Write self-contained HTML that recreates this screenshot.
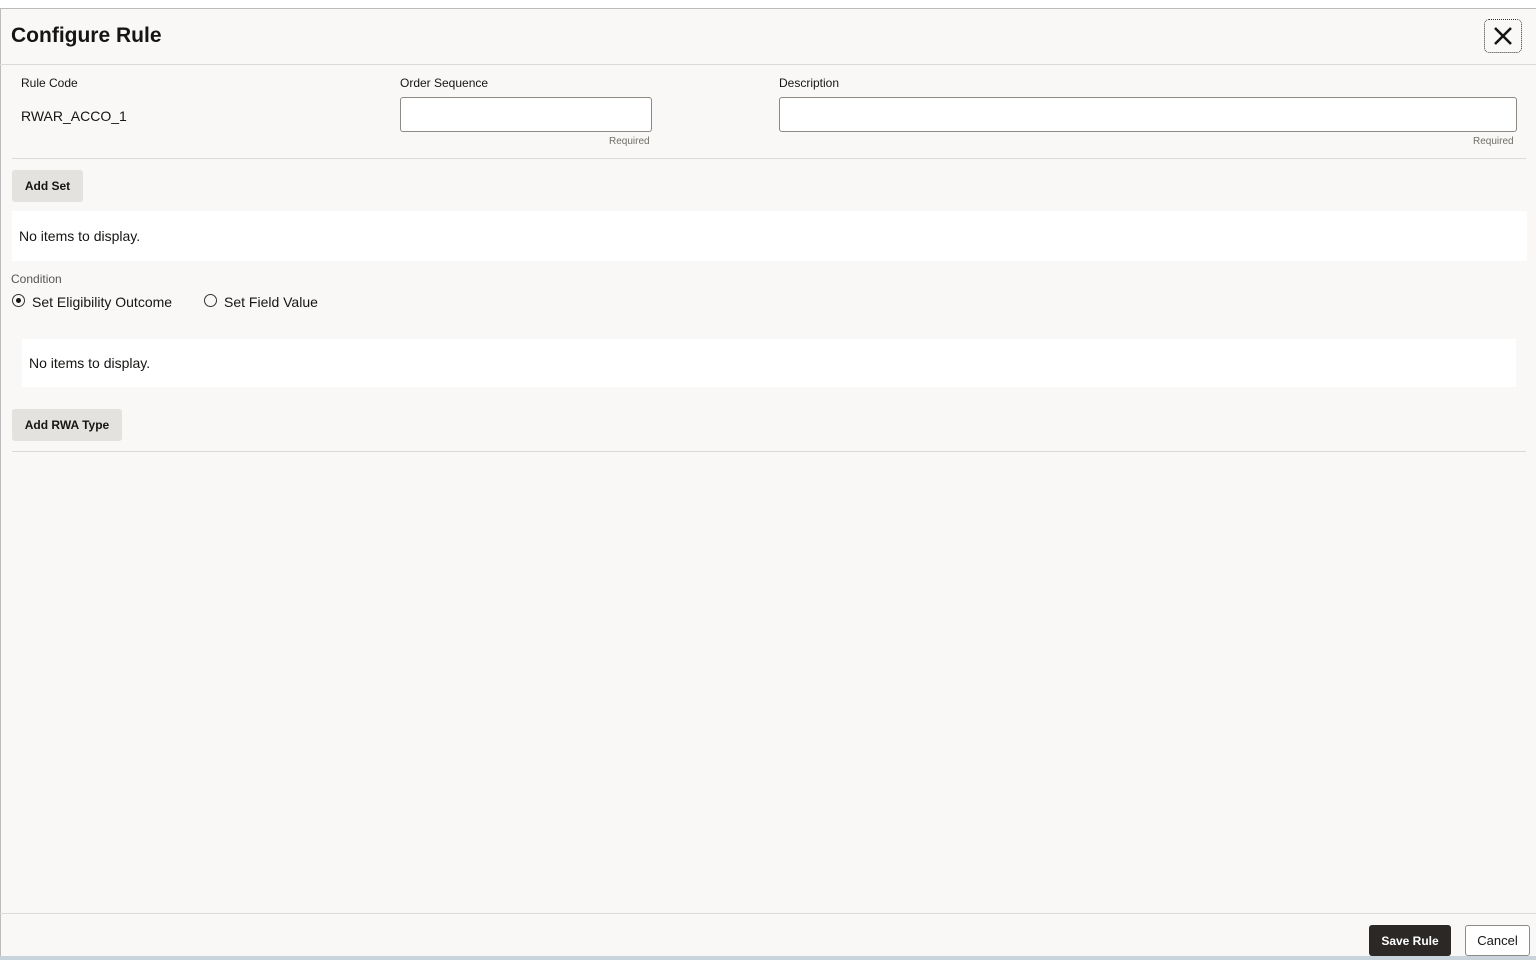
<!DOCTYPE html>
<html><head><style>
*{box-sizing:border-box;margin:0;padding:0}
body{width:1536px;height:960px;background:#fff;font-family:"Liberation Sans",sans-serif;color:#161513;position:relative;overflow:hidden}
.dlg{position:absolute;left:0;top:8px;width:1536px;height:948px;background:#f9f8f6;box-shadow:inset 1px 1px 0 #bbb}
.a{position:absolute}
.lbl{font-size:12px;color:#161513}
.inp{position:absolute;height:35px;border:1px solid #8d8a86;border-radius:3px;background:#fff}
.req{font-size:10px;color:#6f6c68;position:absolute}
.btn{position:absolute;background:#e4e2df;border-radius:3px;font-size:12px;font-weight:bold;display:flex;align-items:center;justify-content:center;color:#161513}
.hr{position:absolute;height:1px;background:#dcdad6}
.empty{position:absolute;background:#fff;font-size:14px;padding-left:7px;display:flex;align-items:center}
.radio{position:absolute;width:13px;height:13px;border:1.5px solid #333;border-radius:50%}
</style></head><body>
<div class="dlg">
<div class="a" style="left:11px;top:16px;font-size:21px;font-weight:bold">Configure Rule</div>
<div class="a" style="left:1484px;top:11px;width:38px;height:34px;border:1px dotted #333;border-radius:5px">
<svg width="36" height="32" viewBox="0 0 36 32"><path d="M10 8L26 24M26 8L10 24" stroke="#161513" stroke-width="2.6"/></svg></div>
<div class="hr" style="left:0;top:56px;width:1536px"></div>
<div class="a lbl" style="left:21px;top:68px">Rule Code</div>
<div class="a" style="left:21px;top:100px;font-size:14px">RWAR_ACCO_1</div>
<div class="a lbl" style="left:400px;top:68px">Order Sequence</div>
<div class="inp" style="left:400px;top:89px;width:252px"></div>
<div class="req" style="left:609px;top:128px">Required</div>
<div class="a lbl" style="left:779px;top:68px">Description</div>
<div class="inp" style="left:779px;top:89px;width:738px"></div>
<div class="req" style="left:1473px;top:128px">Required</div>
<div class="hr" style="left:12px;top:150px;width:1514px"></div>
<div class="btn" style="left:12px;top:162px;width:71px;height:32px">Add Set</div>
<div class="empty" style="left:12px;top:203px;width:1515px;height:50px">No items to display.</div>
<div class="a" style="left:11px;top:264px;font-size:12px;color:#555">Condition</div>
<div class="radio" style="left:12px;top:286px"><div style="position:absolute;left:2.5px;top:2.5px;width:5px;height:5px;border-radius:50%;background:#161513"></div></div>
<div class="a" style="left:32px;top:286px;font-size:14px">Set Eligibility Outcome</div>
<div class="radio" style="left:204px;top:286px"></div>
<div class="a" style="left:224px;top:286px;font-size:14px">Set Field Value</div>
<div class="empty" style="left:22px;top:331px;width:1494px;height:48px">No items to display.</div>
<div class="btn" style="left:12px;top:401px;width:110px;height:32px">Add RWA Type</div>
<div class="hr" style="left:12px;top:443px;width:1514px"></div>
<div class="hr" style="left:0;top:905px;width:1536px"></div>
<div class="btn" style="left:1369px;top:917px;width:82px;height:31px;background:#2b2826;color:#fff">Save Rule</div>
<div class="btn" style="left:1465px;top:917px;width:65px;height:31px;background:#fff;border:1px solid #8d8a86;font-weight:normal;font-size:13px">Cancel</div>
</div>
<div class="a" style="left:0;top:956px;width:1536px;height:4px;background:#c8d3dc"></div>
</body></html>
